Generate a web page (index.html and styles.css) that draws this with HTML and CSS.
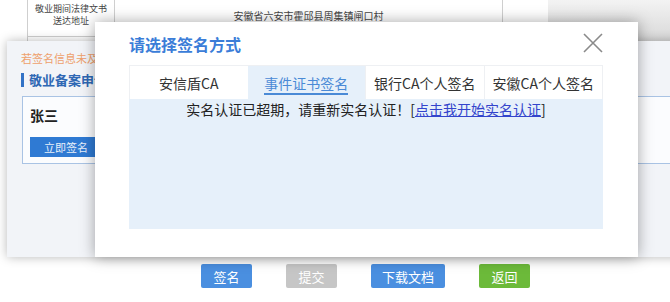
FILE: index.html
```html
<!DOCTYPE html>
<html lang="zh-CN">
<head>
    <meta charset="UTF-8">
    <title>选择签名方式</title>
    <link rel="stylesheet" href="styles.css">
</head>
<body>
    <div class="page">
        <div class="main">
            <table class="info-table">
                <tr class="row-address">
                    <th>敬业期间法律文书<br>送达地址</th>
                    <td>安徽省六安市霍邱县周集镇闸口村</td>
                </tr>
                <tr class="row-empty">
                    <th></th>
                    <td></td>
                </tr>
            </table>
        </div>
        <div class="footer">
            <button class="btn btn-blue btn-sm">签名</button>
            <button class="btn btn-gray btn-sm">提交</button>
            <button class="btn btn-blue btn-lg">下载文档</button>
            <button class="btn btn-green btn-sm">返回</button>
        </div>
    </div>

    <div class="shade"></div>

    <div class="layer">
        <p class="layer-tip">若签名信息未及时更新，请刷新页面</p>
        <h3 class="layer-title">敬业备案申请书</h3>
        <div class="signer-box">
            <div class="signer-name">张三</div>
            <button class="sign-now">立即签名</button>
        </div>
    </div>

    <div class="dialog">
        <div class="dialog-header">
            <h2>请选择签名方式</h2>
            <span class="close">
                <svg width="20" height="20" viewBox="0 0 20 20">
                    <path d="M1 1 L19 19 M19 1 L1 19" stroke="#8a8a8a" stroke-width="1.6" fill="none"/>
                </svg>
            </span>
        </div>
        <div class="tabs">
            <div class="tab">安信盾CA</div>
            <div class="tab active"><span>事件证书签名</span></div>
            <div class="tab">银行CA个人签名</div>
            <div class="tab">安徽CA个人签名</div>
        </div>
        <div class="tab-content">
            实名认证已超期，请重新实名认证！[<a href="#">点击我开始实名认证</a>]
        </div>
    </div>
</body>
</html>
```

FILE: styles.css
```css
:root {
    --blue: #3b7dd8;
    --btn-blue: #4a8fe0;
    --tab-bg: #e6f0fa;
    --panel-bg: #f2f4f8;
    --text: #333333;
}

body {
    margin: 0;
    font-family: "Noto Sans CJK SC", "Noto Sans", sans-serif;
    color: var(--text);
    background: #ffffff;
    overflow: hidden;
}

.page {
    width: 670px;
    height: 302px;
}

.main {
    height: 264px;
}

.info-table {
    margin-left: 27px;
    width: 476px;
    border-collapse: collapse;
    font-size: 10px;
    color: #444;
}

.info-table th,
.info-table td {
    border: 1px solid #cfcfcf;
    border-top: none;
    font-weight: normal;
    text-align: center;
}

.info-table th {
    width: 78px;
    font-size: 9px;
    line-height: 12px;
}

.row-address th,
.row-address td {
    height: 30px;
    padding: 0 4px 6px;
}

.row-empty th,
.row-empty td {
    height: 38px;
}

.footer {
    display: flex;
    gap: 34px;
    padding-left: 201px;
}

.btn {
    height: 24px;
    border: none;
    border-radius: 2px;
    color: #fff;
    font-family: inherit;
    font-size: 13px;
    padding: 0;
}

.btn-sm {
    width: 51px;
}

.btn-lg {
    width: 74px;
}

.btn-blue {
    background: var(--btn-blue);
}

.btn-gray {
    background: #c6c6c6;
}

.btn-green {
    background: #6cba3a;
}

/* the gray strip at top right */
.shade {
    position: absolute;
    left: 548px;
    top: 0;
    right: 0;
    height: 41px;
    background: linear-gradient(to bottom, #f3f3f3, #d8d8d8);
}

/* underlying signing layer */
.layer {
    position: absolute;
    left: 7px;
    top: 41px;
    right: -20px;
    height: 216px;
    padding: 9px 0 0 14px;
    background: var(--panel-bg);
    box-shadow: 0 0 10px rgba(0, 0, 0, 0.28);
    box-sizing: border-box;
}

.layer-tip {
    margin: 0;
    width: 74px;
    overflow: hidden;
    font-size: 11px;
    line-height: 16px;
    color: #eea06c;
    white-space: nowrap;
}

.layer-title {
    margin: 7px 0 0;
    width: 66px;
    overflow: hidden;
    padding-left: 5px;
    border-left: 3px solid #3272c6;
    font-size: 13px;
    line-height: 14px;
    color: #2f68b4;
    white-space: nowrap;
}

.signer-box {
    margin: 9px 0 0 1px;
    height: 68px;
    padding: 8px 0 0 7px;
    border: 1px solid #a9c3e4;
    background: #fbfcfe;
    box-sizing: border-box;
}

.signer-name {
    font-size: 14px;
    font-weight: bold;
    line-height: 20px;
    color: #222;
}

.sign-now {
    margin-top: 12px;
    width: 72px;
    height: 20px;
    border: none;
    padding: 0;
    background: #2f7ad3;
    color: #e8f0fa;
    font-family: inherit;
    font-size: 11px;
}

/* dialog */
.dialog {
    position: absolute;
    left: 95px;
    top: 22px;
    width: 543px;
    height: 235px;
    padding: 0 35px 28px 34px;
    background: #fff;
    box-shadow: 0 0 14px rgba(0, 0, 0, 0.35);
    box-sizing: border-box;
}

.dialog-header {
    height: 43px;
    display: flex;
    align-items: center;
    justify-content: space-between;
}

.dialog-header h2 {
    margin: 0;
    font-size: 16px;
    font-weight: bold;
    color: var(--blue);
}

.close {
    display: flex;
    margin-top: -1px;
}

.tabs {
    display: flex;
    height: 34px;
    box-sizing: border-box;
    border: 1px solid #eef0f3;
    border-bottom: none;
}

.tab {
    flex: 1;
    display: flex;
    align-items: center;
    justify-content: center;
    font-size: 14px;
    color: #333;
    background: #fff;
    border-left: 1px solid #eef0f3;
}

.tab:first-child {
    border-left: none;
}

.tab.active {
    background: var(--tab-bg);
    color: #4a8ad6;
    border-left: none;
}

.tab.active span {
    line-height: 20px;
    padding-top: 2px;
    border-bottom: 2px solid #4a8ad6;
}

.tab-content {
    height: 130px;
    background: var(--tab-bg);
    text-align: center;
    font-size: 14px;
    line-height: 20px;
    color: #222;
}

.tab-content a {
    color: #3344cc;
}
```
